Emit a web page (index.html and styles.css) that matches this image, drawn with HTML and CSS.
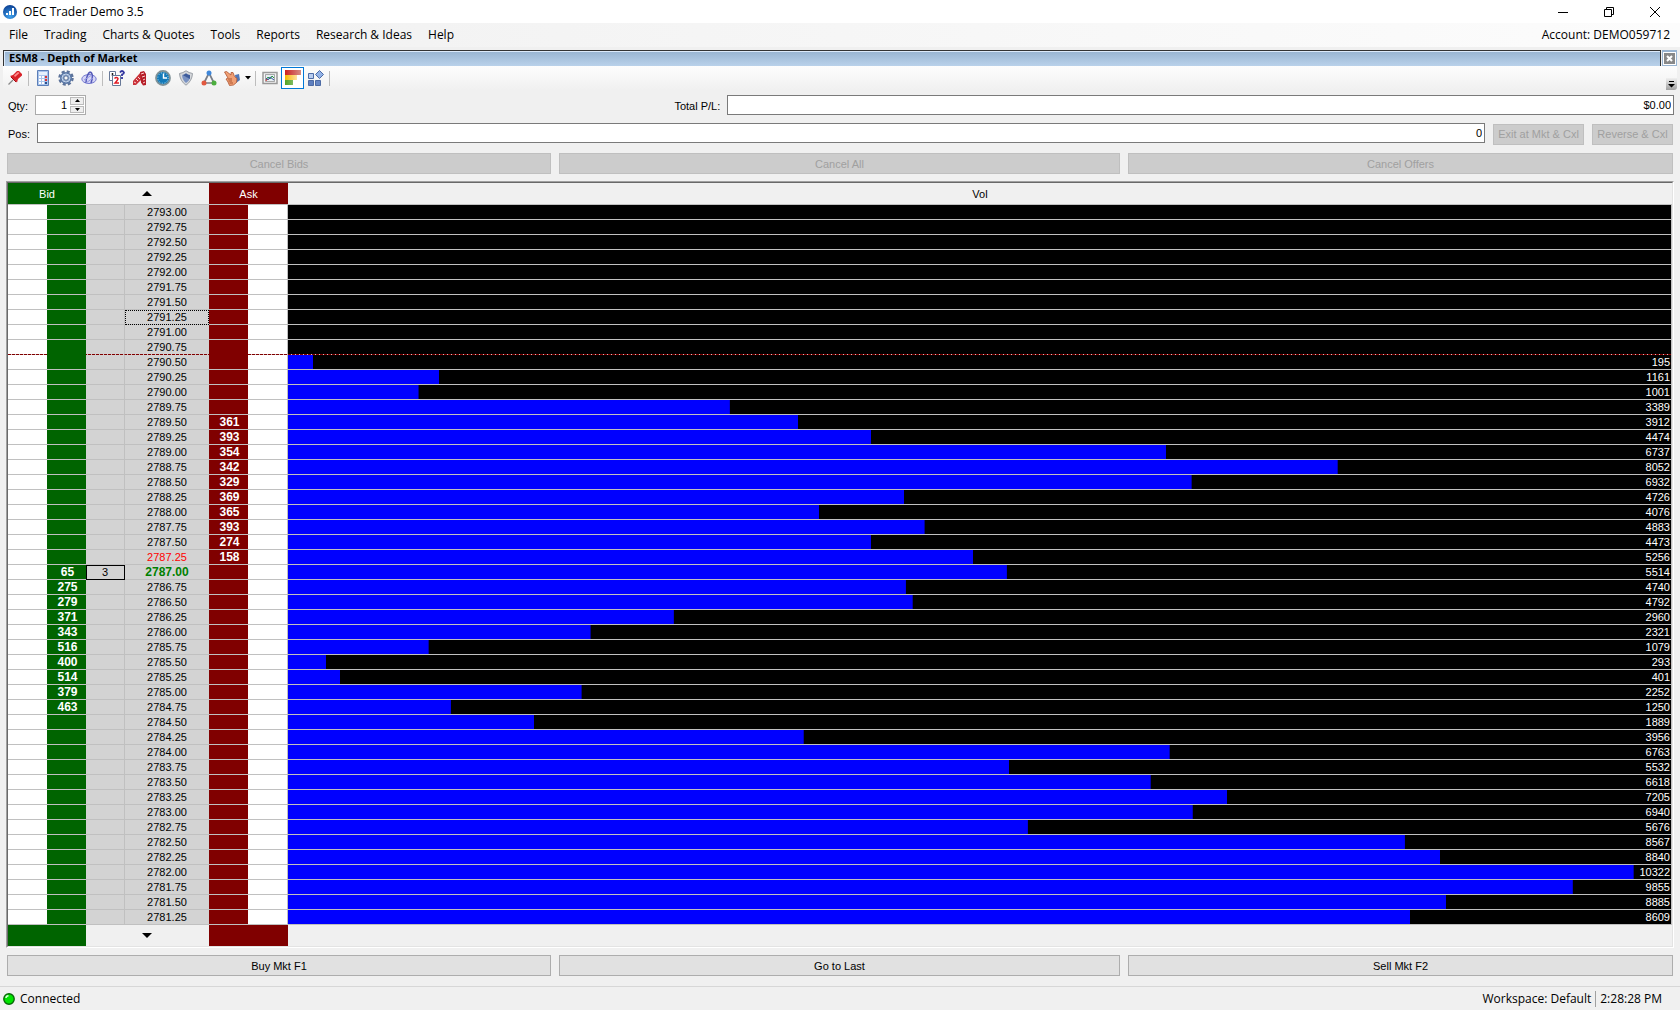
FILE: index.html
```html
<!DOCTYPE html>
<html lang="en">
<head>
<meta charset="utf-8">
<title>OEC Trader Demo 3.5</title>
<link rel="stylesheet" href="styles.css">
</head>
<body>
<div class="app">
  <header class="titlebar">
    <svg class="logo" viewBox="0 0 16 16" aria-hidden="true"><defs><radialGradient id="lg" cx=".5" cy=".8" r=".8"><stop offset="0" stop-color="#3fa3ee"/><stop offset="1" stop-color="#0b3f93"/></radialGradient></defs><circle cx="8" cy="8" r="7" fill="url(#lg)"/><path d="M4 11V9h2v2zM7 11V7h2v4zM10 11V4h2v7z" fill="#fff"/></svg>
    <h1 class="app-name">OEC Trader Demo 3.5</h1>
    <div class="window-buttons">
      <button aria-label="Minimize"><svg viewBox="0 0 12 12"><path d="M1 6.5h10"/></svg></button>
      <button aria-label="Restore"><svg viewBox="0 0 12 12"><path d="M1.500 3.500h7v7h-7zM3.500 3.500v-2h7v7h-2"/></svg></button>
      <button aria-label="Close"><svg viewBox="0 0 12 12"><path d="M1 1l10 10M11 1L1 11"/></svg></button>
    </div>
  </header>

  <nav class="menubar">
    <button>File</button><button>Trading</button><button>Charts &amp; Quotes</button><button>Tools</button><button>Reports</button><button>Research &amp; Ideas</button><button>Help</button>
    <span class="account">Account: DEMO059712</span>
  </nav>

  <div class="panel-head">
    <h2 class="panel-title">ESM8 - Depth of Market</h2>
    <button class="panel-close" aria-label="Close panel"><svg viewBox="0 0 11 11"><path d="M3 3l5 5M8 3l-5 5"/></svg></button>
  </div>

  <div class="toolbar">
    <button class="tool" aria-label="Pin"><svg viewBox="0 0 16 16"><path d="M1.500 14.500L6 10" stroke="#888" stroke-width="1.200"/><path d="M3 6l3-1 4-4h2l3 3v1.500L11 9l-1 3.500z" fill="#d8232a"/><path d="M7 5.500l4-3.500 1.500 1L8 7z" fill="#ff8d8d"/><path d="M4 7l5 5" stroke="#9b1016"/></svg></button>
    <i class="sep"></i>
    <button class="tool" aria-label="Calculator"><svg viewBox="0 0 16 16"><path d="M2.500 .5h11v15h-11z" fill="#a9c4ec" stroke="#5c7fb8"/><path d="M4 2h8v3H4z" fill="#e6f0fc"/><path d="M4 7h2M7 7h2M4 10h2M7 10h2M4 13h2M7 13h2" stroke="#fff" stroke-width="2"/><path d="M10 7h2M10 10h2" stroke="#d33" stroke-width="2"/><path d="M10 13h2" stroke="#2c4f8c" stroke-width="2"/></svg></button>
    <button class="tool" aria-label="Settings"><svg viewBox="0 0 16 16"><circle cx="8" cy="8" r="6.500" fill="none" stroke="#5c7299" stroke-width="2.500" stroke-dasharray="3 2.100"/><circle cx="8" cy="8" r="4.800" fill="#8fa9cf" stroke="#5d7aa8" stroke-width="2.500"/><circle cx="8" cy="8" r="4" fill="none" stroke="#c5d5ec"/><circle cx="8" cy="8" r="2.200" fill="#f7f7f7" stroke="#536b94"/></svg></button>
    <button class="tool" aria-label="Orbit"><svg viewBox="0 0 16 16"><g fill="none" stroke="#7479d0"><ellipse cx="8" cy="9" rx="7.200" ry="4.500" fill="#d5d5f6"/><path d="M5 13c0-5 2-10 4-11M9 2c3 1 3 6 1 11" stroke="#5459b8" stroke-width="1.500"/><path d="M3 10l8-5M5 13l7-5" stroke="#9599e4"/></g></svg></button>
    <i class="sep"></i>
    <button class="tool" aria-label="Order confirmation"><svg viewBox="0 0 16 16"><path d="M.5 1.500h6v9h-6z" fill="#fff" stroke="#687998"/><path d="M3.500 3v3" stroke="#222" stroke-width="1.500"/><path d="M3.500 5.500h8v10h-8z" fill="#fff" stroke="#687998"/><path d="M5.500 8.500q2-2 3.500 0q0 1.500-3 4.500h4" fill="none" stroke="#e01b24" stroke-width="1.400"/><path d="M11 2.500q2-3 4 0q0 1.500-2 2v1.500M13 7v2" fill="none" stroke="#3336a0" stroke-width="1.800"/></svg></button>
    <button class="tool" aria-label="Order ladder"><svg viewBox="0 0 16 16"><path d="M1 11l7-8 3 1v4l-7 7H1z" fill="#c9323a"/><path d="M8 2l4-1 2 3v11l-3 .5-2-3z" fill="#b51e28"/><path d="M2 12l2 1M4 9l2 2M6 7l2 2M9 4l3-1M10 7l3-1M11 10l2-1M11 13l2-1" stroke="#ffd0d0"/></svg></button>
    <button class="tool" aria-label="History"><svg viewBox="0 0 16 16"><circle cx="8" cy="8" r="7" fill="#1479b8" stroke="#7f9298" stroke-width="1.800"/><circle cx="8" cy="8" r="5.200" fill="none" stroke="#a4dcf6" stroke-dasharray="1 1.720"/><path d="M8.500 3.500V8H12" fill="none" stroke="#fff" stroke-width="1.400"/></svg></button>
    <button class="tool" aria-label="Protection"><svg viewBox="0 0 16 16"><path d="M1.500 3.500Q5 3 8 .8q3 2.200 6.500 2.700Q14 11 8 15.200 2 11 1.500 3.500z" fill="#d5d8dc" stroke="#9a9fa6"/><path d="M4 5.200l8 3Q11 11 8 13 4.500 10 4 5.200z" fill="#7891c2"/><path d="M4 5q2-.3 4-1.700 2 1.500 4 1.700v4z" fill="#3d5c9c"/></svg></button>
    <button class="tool" aria-label="Linked orders"><svg viewBox="0 0 16 16"><path d="M8 3L3 13h10z" fill="none" stroke="#787e88" stroke-width="1.700"/><circle cx="8" cy="3" r="2.500" fill="#3f87d9"/><circle cx="3" cy="13" r="2.500" fill="#e2583f"/><circle cx="13" cy="13" r="2.500" fill="#4cae3e"/></svg></button>
    <button class="tool" aria-label="Manual trade"><svg viewBox="0 0 16 16"><path d="M11 5l4-1 1 6-4 3z" fill="#4f78b8"/><path d="M.5 2l2-.5L7 5V2.500l2 0 1.500 4 2.500 2-.5 4-3 2.500-4 .5L4 12l-2-3 2-1z" fill="#f0a075" stroke="#ae5632" stroke-width=".8"/><path d="M4 9h4M4.500 11H8M5.500 13H9" stroke="#ae5632"/></svg></button>
    <button class="tool-arrow" aria-label="More trade options"><svg viewBox="0 0 6 4"><path d="M0 0h6L3 3.500z"/></svg></button>
    <i class="sep"></i>
    <button class="tool" aria-label="Chart"><svg viewBox="0 0 16 16"><path d="M1 2.500h14v11H1z" fill="#f4f4f4" stroke="#999" stroke-width="1.500"/><path d="M3.500 4.500h9v7h-9z" fill="#e8eef2" stroke="#777" stroke-width=".6"/><path d="M4 10l2-3 2 2 2-3 2 2" fill="none" stroke="#2a9546"/><path d="M4 8l2 2 2-3 4 3" fill="none" stroke="#3955a5"/><path d="M4 11l1-2" stroke="#d33"/></svg></button>
    <button class="tool tool-on" aria-label="Volume profile" aria-pressed="true"><svg viewBox="0 0 16 16"><defs><linearGradient id="r"><stop stop-color="#ce2020"/><stop offset="1" stop-color="#d58d85"/></linearGradient><linearGradient id="y"><stop stop-color="#f5b800"/><stop offset="1" stop-color="#ffe2a0"/></linearGradient><linearGradient id="g"><stop stop-color="#55a322"/><stop offset="1" stop-color="#7cba61"/></linearGradient></defs><path d="M0 0h16v5H0z" fill="url(#r)"/><path d="M0 5h12v5H0z" fill="url(#y)"/><path d="M0 10h8v5H0z" fill="url(#g)"/></svg></button>
    <button class="tool" aria-label="Layout"><svg viewBox="0 0 16 16"><g stroke="#4d6ba5"><path d="M.5 3.500h5v5h-5z" fill="#b8cdf0"/><path d="M.5 10.500h5v5h-5z" fill="#5e7fbf"/><path d="M7.500 10.500h5v5h-5z" fill="#6787c4"/><path d="M11.500 .5L15.500 4.500l-4 4-4-4z" fill="#92b2e6"/></g></svg></button>
    <i class="sep"></i>
    <button class="overflow" aria-label="Toolbar options"><svg viewBox="0 0 7 7"><path d="M1 0h5v1H1zM0 3h7L3.500 6.500z"/></svg></button>
  </div>

  <main class="dom">
    <div class="form-row">
      <div class="field qty">
        <label for="qty">Qty:</label>
        <div class="spinner">
          <input id="qty" type="number" value="1">
          <div class="steps">
            <button aria-label="Increase"><svg viewBox="0 0 5 3"><path d="M0 3h5L2.500 0z"/></svg></button>
            <button aria-label="Decrease"><svg viewBox="0 0 5 3"><path d="M0 0h5L2.500 3z"/></svg></button>
          </div>
        </div>
      </div>
      <div class="field pl">
        <label for="pl">Total P/L:</label>
        <input id="pl" class="readout" type="text" value="$0.00" readonly>
      </div>
    </div>
    <div class="form-row">
      <div class="field pos">
        <label for="pos">Pos:</label>
        <input id="pos" class="readout" type="text" value="0" readonly>
      </div>
      <button class="btn exit" disabled>Exit at Mkt &amp; Cxl</button>
      <button class="btn reverse" disabled>Reverse &amp; Cxl</button>
    </div>
    <div class="button-row cancel-row">
      <button class="btn" disabled>Cancel Bids</button>
      <button class="btn" disabled>Cancel All</button>
      <button class="btn" disabled>Cancel Offers</button>
    </div>

    <div class="frame">
      <table class="ladder">
        <colgroup><col class="c-side"><col class="c-side"><col class="c-side"><col class="c-price"><col class="c-side"><col class="c-ask-order"><col></colgroup>
        <thead>
          <tr>
            <th class="green" colspan="2">Bid</th>
            <th colspan="2"><button class="scroll" aria-label="Scroll up"><svg viewBox="0 0 10 5"><path d="M0 5h10L5 0z"/></svg></button></th>
            <th class="maroon" colspan="2">Ask</th>
            <th>Vol</th>
          </tr>
        </thead>
        <tbody id="levels"></tbody>
        <tfoot>
          <tr>
            <td class="green" colspan="2"></td>
            <td colspan="2"><button class="scroll" aria-label="Scroll down"><svg viewBox="0 0 10 5"><path d="M0 0h10L5 5z"/></svg></button></td>
            <td class="maroon" colspan="2"></td>
            <td></td>
          </tr>
        </tfoot>
      </table>
    </div>

    <div class="button-row">
      <button class="btn">Buy Mkt F1</button>
      <button class="btn">Go to Last</button>
      <button class="btn">Sell Mkt F2</button>
    </div>
  </main>

  <footer class="statusbar">
    <svg class="led" viewBox="0 0 12 12" aria-hidden="true"><circle cx="6" cy="6" r="5.200" fill="#00e400" stroke="#056805" stroke-width="1.400"/><path d="M3 5q0-2 2.500-2.200" fill="none" stroke="#d6ffd6" stroke-width="1.500"/></svg>
    <span>Connected</span>
    <span class="workspace">Workspace: Default</span>
    <span class="clock">2:28:28 PM</span>
  </footer>
</div>
<script src="ladder.js"></script>
</body>
</html>
```
FILE: ladder.js
```js
const TOP_PRICE = 2793;
const TICK = 0.25;
const LAST_PRICE = 2787;
const PREVIOUS_PRICE = 2787.25;
const FOCUSED_PRICE = 2791.25;
const SESSION_HIGH_ROW = 9;
const BAR_SCALE = 97.3;

const volumes = [
  0, 0, 0, 0, 0, 0, 0, 0, 0, 0,
  195, 1161, 1001, 3389, 3912, 4474, 6737, 8052, 6932, 4726,
  4076, 4883, 4473, 5256, 5514, 4740, 4792, 2960, 2321, 1079,
  293, 401, 2252, 1250, 1889, 3956, 6763, 5532, 6618, 7205,
  6940, 5676, 8567, 8840, 10322, 9855, 8885, 8609
];
const asks = { 14: 361, 15: 393, 16: 354, 17: 342, 18: 329, 19: 369, 20: 365, 21: 393, 22: 274, 23: 158 };
const bids = { 24: 65, 25: 275, 26: 279, 27: 371, 28: 343, 29: 516, 30: 400, 31: 514, 32: 379, 33: 463 };
const lastSize = 3;
const maxVolume = Math.max(...volumes);

document.getElementById('levels').innerHTML = volumes.map((volume, i) => {
  const price = TOP_PRICE - i * TICK;
  const isLast = price === LAST_PRICE;
  const priceClass = isLast ? ' last' : price === PREVIOUS_PRICE ? ' previous' : price === FOCUSED_PRICE ? ' focused' : '';
  const width = (volume / maxVolume * BAR_SCALE).toFixed(2);
  return `<tr${i === SESSION_HIGH_ROW ? ' class="session-high"' : ''}>
    <td class="order"></td>
    <td class="size green">${bids[i] || ''}</td>
    <td class="trade${isLast ? ' boxed' : ''}">${isLast ? lastSize : ''}</td>
    <td class="price${priceClass}">${price.toFixed(2)}</td>
    <td class="size maroon">${asks[i] || ''}</td>
    <td class="order ask-order"></td>
    <td class="vol" style="--bar: ${width}%">${volume || ''}</td>
  </tr>`;
}).join('');
```
FILE: styles.css
```css
* { box-sizing: border-box; }

body {
  margin: 0;
  background: #f0f0f0;
  color: #000;
  font: 12px/16px "Open Sans", "Noto Sans", sans-serif;
}

h1, h2 { margin: 0; font: inherit; }
button, input { font: inherit; color: inherit; padding: 0; margin: 0; border: 0; border-radius: 0; background: none; }
svg { display: block; }

.app { display: flex; flex-direction: column; min-height: 100vh; }

/* Window title */
.titlebar { display: flex; align-items: center; height: 23px; padding: 0 2px; background: #fff; }
.logo { width: 16px; height: 16px; }
.app-name { margin-left: 5px; }
.window-buttons { display: flex; margin-left: auto; }
.window-buttons button { display: grid; place-items: center; width: 46px; height: 21px; }
.window-buttons svg { width: 12px; height: 12px; fill: none; stroke: #000; }

/* Menu */
.menubar { display: flex; align-items: center; gap: 16px; height: 24px; padding: 0 10px 0 9px; background: linear-gradient(90deg, #f0f0f0, #fcfcfc); }
.account { margin-left: auto; }

/* Panel header */
.panel-head { display: flex; gap: 1px; height: 16px; margin: 3px 3px 0; }
.panel-title {
  flex: 1;
  padding-left: 5px;
  border: solid #333;
  border-width: 1px 1px 0;
  box-shadow: inset 1px 1px #dceafa;
  background: linear-gradient(#98b4d1, #b9d1ea);
  font: bold 11px/14px "Noto Sans", sans-serif;
}
.panel-close { width: 15px; height: 16px; padding: 2px; background: #99b4d1; }
.panel-close svg { width: 11px; height: 11px; background: #888; outline: 1px solid #fff; fill: none; stroke: #fff; stroke-width: 2; }

/* Toolbar */
.toolbar { display: flex; align-items: center; height: 24px; margin: 0 3px; background: linear-gradient(#fdfdfd, #f0f0f0); }
.tool { display: grid; place-items: center; width: 23px; height: 22px; }
.tool svg { width: 16px; height: 16px; }
.tool svg path:not([fill]) { fill: none; }
.tool svg g path[fill] { stroke-width: 1; }
.tool-on { border: 1px solid #0078d7; background: #fff; }
.tool-arrow { display: grid; place-items: center; width: 10px; height: 22px; }
.tool-arrow svg { width: 6px; height: 4px; }
.tool-arrow path, .overflow path { fill: #000; }
.sep { width: 1px; height: 15px; margin: 0 2px; background: #bdbdbd; }
.overflow { display: grid; place-items: center; align-self: flex-end; width: 11px; height: 12px; margin-left: auto; border-radius: 0 0 3px; background: linear-gradient(#f0f0f0, #a0a0a0); }
.overflow svg { width: 7px; height: 7px; }

/* Order entry */
.dom { padding: 0 6px; font: 11px/14px "Liberation Sans", Arial, sans-serif; }
.form-row { display: flex; align-items: center; justify-content: space-between; gap: 8px; height: 20px; margin: 5px 0 8px 2px; }
.field { display: flex; align-items: center; gap: 7px; }
.field label { padding-top: 2px; }
.spinner { display: flex; width: 51px; height: 20px; border: 1px solid #ababab; background: #fff; }
.spinner input { flex: 1; min-width: 0; padding-right: 2px; text-align: right; appearance: textfield; }
.spinner input::-webkit-inner-spin-button { display: none; }
.steps { display: grid; width: 16px; padding: 1px; gap: 1px; }
.steps button { display: grid; place-items: center; border: 1px solid #bbb; background: #eee; }
.steps svg { width: 5px; height: 3px; }
.pl { flex: 0 0 60%; }
.pos { flex: 1; }
.readout { flex: 1; min-width: 0; height: 20px; padding: 0 2px; border: 1px solid #7a7a7a; background: #fff; text-align: right; }
.btn { height: 21px; border: 1px solid #adadad; background: #e1e1e1; }
.btn:disabled { border-color: #bfbfbf; background: #ccc; color: #a0a0a0; }
.exit, .reverse { margin-top: 2px; }
.exit { width: 91px; }
.reverse { width: 81px; margin-right: 1px; }
.button-row { display: grid; grid-template-columns: 544fr 561fr 545fr; gap: 8px; margin: 7px 1px; }
.cancel-row { margin-top: 10px; }

/* Price ladder */
.frame { border: 1px solid; border-color: #a0a0a0 #fff #fff #a0a0a0; }
.ladder { width: 100%; table-layout: fixed; border: 1px solid; border-color: #696969 #e3e3e3 #e3e3e3 #696969; border-spacing: 0; }
.c-side { width: 39px; }
.c-price { width: 84px; }
.c-ask-order { width: 40px; }
.ladder th, .ladder td { padding: 0; text-align: center; font-weight: normal; }
.ladder th { height: 22px; border-bottom: 1px solid #c0c0c0; }
.ladder tfoot td { height: 21px; }
.ladder .green { background: #006400; color: #fff; }
.ladder .maroon { background: #800000; color: #fff; }
.scroll { display: grid; place-items: center; width: 100%; height: 14px; padding-right: 2px; }
.scroll svg { width: 10px; height: 5px; }
.ladder tbody td { height: 15px; border-bottom: 1px solid #c0c0c0; background-clip: padding-box; line-height: 14px; }
.ladder .order { background-color: #fff; }
.ladder .ask-order { border-right: 1px solid #c0c0c0; }
.ladder .trade { border-right: 1px solid #c0c0c0; background-color: #d3d3d3; }
.ladder .boxed { outline: 1px solid #000; outline-offset: -1px; }
.ladder .price { background-color: #d3d3d3; }
.ladder .previous { color: #f00; }
.ladder .last { color: #008000; font-size: 12px; font-weight: bold; }
.ladder .focused { outline: 1px dotted #000; outline-offset: -1px; }
.ladder .size { padding-left: 2px; font-size: 12px; font-weight: bold; }
.ladder .vol {
  padding-right: 1px;
  border-right: 1px solid #c0c0c0;
  background: linear-gradient(#00f, #00f) 0 0 / var(--bar) 100% no-repeat padding-box, #000 padding-box;
  background-clip: padding-box;
  color: #fff;
  text-align: right;
}
.session-high { background: repeating-linear-gradient(90deg, #800000 0 3px, #d8c0c0 3px 4px); }
.ladder .session-high td { border-bottom-color: transparent; }

/* Status bar */
.statusbar { display: flex; align-items: center; flex: 1; min-height: 24px; margin-top: 3px; padding: 0 18px 0 3px; border-top: 1px solid #d7d7d7; }
.led { width: 12px; height: 12px; margin-right: 5px; }
.workspace { margin-left: auto; padding-right: 4px; }
.clock { padding-left: 4px; border-left: 1px solid #a0a0a0; }
```
